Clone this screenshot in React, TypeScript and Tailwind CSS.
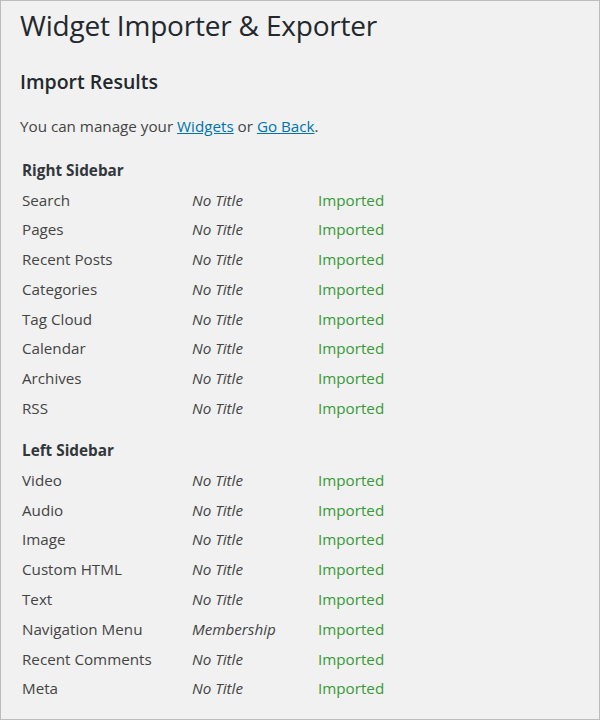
import React from "react";

type Row = { name: string; title: string; status: string };

const sidebars: { heading: string; rows: Row[] }[] = [
  {
    heading: "Right Sidebar",
    rows: [
      { name: "Search", title: "No Title", status: "Imported" },
      { name: "Pages", title: "No Title", status: "Imported" },
      { name: "Recent Posts", title: "No Title", status: "Imported" },
      { name: "Categories", title: "No Title", status: "Imported" },
      { name: "Tag Cloud", title: "No Title", status: "Imported" },
      { name: "Calendar", title: "No Title", status: "Imported" },
      { name: "Archives", title: "No Title", status: "Imported" },
      { name: "RSS", title: "No Title", status: "Imported" },
    ],
  },
  {
    heading: "Left Sidebar",
    rows: [
      { name: "Video", title: "No Title", status: "Imported" },
      { name: "Audio", title: "No Title", status: "Imported" },
      { name: "Image", title: "No Title", status: "Imported" },
      { name: "Custom HTML", title: "No Title", status: "Imported" },
      { name: "Text", title: "No Title", status: "Imported" },
      { name: "Navigation Menu", title: "Membership", status: "Imported" },
      { name: "Recent Comments", title: "No Title", status: "Imported" },
      { name: "Meta", title: "No Title", status: "Imported" },
    ],
  },
];

export default function App() {
  return (
    <div
      className="w-[600px] h-[720px] bg-[#f1f1f1] border border-[#bdbdbd] text-[#444] overflow-hidden"
      style={{ fontFamily: '"Open Sans", "Noto Sans", sans-serif' }}
    >
      <div className="pl-[19px] pt-[4px]">
        {/* title */}
        <h1 className="text-[28px] leading-[40px] text-[#23282d] font-normal tracking-[-0.2px]">
          Widget Importer &amp; Exporter
        </h1>

        <h2 className="mt-[22px] text-[19.5px] leading-[30px] font-semibold text-[#23282d]">
          Import Results
        </h2>

        <p className="mt-[18px] text-[15.2px] leading-[22px]">
          You can manage your{" "}
          <a href="#" className="text-[#0073aa] underline">
            Widgets
          </a>{" "}
          or{" "}
          <a href="#" className="text-[#0073aa] underline">
            Go Back
          </a>
          .
        </p>

        <div className="mt-[18px] pl-[2px]">
          {sidebars.map((sb, i) => (
            <div key={sb.heading} className={i > 0 ? "mt-[12px]" : ""}>
              <div className="h-[30px] flex items-center text-[15.3px] font-bold text-[#32373c]">
                {sb.heading}
              </div>
              {sb.rows.map((r) => (
                <div key={r.name} className="grid grid-cols-[170px_126px_1fr] h-[29.8px] items-center text-[15.2px]">
                  <span>{r.name}</span>
                  <span className="italic">{r.title}</span>
                  <span className="text-[#379a37]">{r.status}</span>
                </div>
              ))}
            </div>
          ))}
        </div>
      </div>
    </div>
  );
}
